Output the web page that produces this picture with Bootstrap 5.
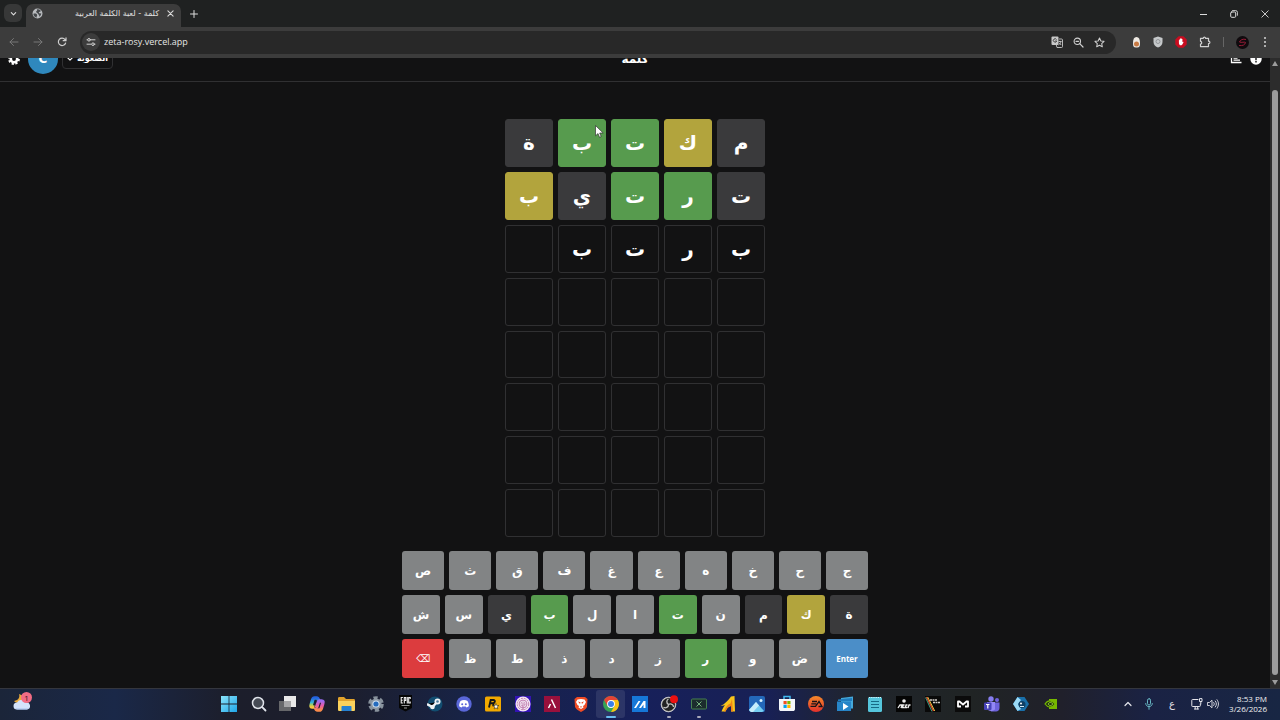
<!DOCTYPE html>
<html lang="ar">
<head>
<meta charset="utf-8">
<meta name="viewport" content="width=device-width, initial-scale=1">
<title>كلمة - لعبة الكلمة العربية</title>
<link href="https://cdn.jsdelivr.net/npm/bootstrap@5.3.0/dist/css/bootstrap.min.css" rel="stylesheet">
<style>
  body { background: #121213; color: #fff; font-family: "Open Sans", "DejaVu Sans", sans-serif; }
  button { border: 0; background: none; padding: 0; color: inherit; }
  svg { display: block; flex: none; }
  .line { fill: none; stroke: currentColor; stroke-linecap: round; stroke-linejoin: round; }

  /* browser frame */
  .tabstrip { height: 27px; background: #1f2121; color: #dcdcdc; }
  .tab-search { width: 18px; height: 18px; border-radius: 6px; background: #373838; margin: 4px; }
  .tab-open { width: 155px; height: 23px; border-radius: 7px 7px 0 0; background: #3c3c3c; padding: 0 7px 4px 6px; }
  .tab-title { font: 8px/14px "DejaVu Sans", sans-serif; color: #e0e0e0; }
  .new-tab { margin-left: 9px; }
  .window-buttons { gap: 23px; padding-right: 11px; }
  .toolbar { height: 31px; background: #3c3c3c; color: #d0d0d0; padding-bottom: 1px; }
  .nav-buttons { width: 80px; padding-left: 2px; }
  .nav-buttons button { width: 24px; }
  .omnibox { height: 23px; border-radius: 12px; background: #282828; padding: 0 11px 0 2px; }
  .omnibox-actions { gap: 10px; }
  .site-info { width: 18px; height: 18px; border-radius: 9px; background: #3c3c3c; }
  .address { border: 0; background: none; outline: 0; padding: 0; color: #e6e6e6; font: 9px/14px "Open Sans", sans-serif; }
  .extensions { gap: 12px; padding: 0 11px 0 16px; }
  .divider { width: 1px; height: 10px; background: #666; }

  /* game */
  .game { background: #121213; font-family: "DejaVu Sans", sans-serif; }
  .game-header { height: 45px; margin-top: -21px; border-bottom: 1px solid #303032; }
  .side { flex: 1 1 0; }
  .game-title { font-size: 12px; line-height: 20px; font-weight: 700; }
  .avatar { width: 30px; height: 30px; background: #2f88bd; font-size: 12px; font-weight: 700; }
  .level { height: 20px; border: 1px solid #303032; border-radius: 4px; font: 700 8px/14px "DejaVu Sans", sans-serif; }
  .board { grid-template-columns: repeat(5, 48px); grid-template-rows: repeat(8, 1fr); gap: 5px; height: 418px; margin: 37px auto 14px; }
  .cell { border: 1px solid #303032; border-radius: 3px; font-size: 20px; line-height: 28px; font-weight: 700; }
  .miss { background: #3a3a3c; border-color: #3a3a3c; }
  .hit { background: #579b4e; border-color: #579b4e; }
  .near { background: #b2a43d; border-color: #b2a43d; }
  .keyboard { max-width: 466px; width: 100%; }
  .keyboard, .key-row { gap: 5px; }
  .key { flex: 1 1 0; height: 39px; border-radius: 3px; font: 700 12px/16px "DejaVu Sans", sans-serif; }
  .idle { background: #828485; }
  .key-enter { background: #4b8ec8; font-size: 8px; font-family: "Open Sans", sans-serif; }
  .key-delete { background: #dc3c3e; font-weight: 400; font-size: 10px; }

  .scroller { width: 10px; background: #2c2c2c; padding: 3px 2px; gap: 5px; color: #9c9c9c; }
  .scroll-thumb { width: 6px; border-radius: 3px; background: #9c9c9c; margin-top: 19px; }

  /* taskbar */
  .taskbar { height: 32px; padding-bottom: 2px; border-top: 1px solid #34363e; background: linear-gradient(90deg, #1b2539 0, #1a2848 9%, #1c1e2b 18%, #1c1e2d 27%, #182345 36%, #17205a 50%, #182055 60%, #20252c 67%, #202424 76%, #20202b 83%, #1a2244 90%, #182643 100%); }
  .weather { flex: 1 1 0; padding-left: 12px; }
  .apps { flex: 0 0 852px; padding-left: 1px; }
  .apps button { flex: 1 1 0; height: 28px; border-radius: 3px; }
  .apps .front { background: #ffffff18; }
  .badge-count { top: 1px; left: 9px; width: 11px; height: 11px; border-radius: 6px; background: #f36c84; color: #3a1020; font: 8px/11px "Open Sans", sans-serif; }
  .run { left: 50%; bottom: 0; width: 4px; height: 2px; margin-left: -2px; border-radius: 1px; background: #aab; }
  .front .run { width: 10px; margin-left: -5px; background: #68bdf0; }
  .tray { flex: 1 1 0; padding-right: 13px; color: #e4e4ea; }
  .mic { margin-left: 13px; }
  .clock { font: 8px/10px "Open Sans", sans-serif; width: 40px; color: #f2f2f2; }
  .lang { font: 10px/14px "DejaVu Sans", sans-serif; }
  .pointer { left: 595px; top: 125px; }
</style>
</head>
<body class="d-flex flex-column vh-100 overflow-hidden">

<div class="tabstrip d-flex">
  <button class="tab-search d-flex align-items-center justify-content-center" aria-label="Search tabs"><svg width="7" height="7" viewBox="0 0 8 8"><path class="line" stroke-width="1.3" d="M1.5 3 4 5.500 6.500 3"/></svg></button>
  <div class="tab-open d-flex align-items-center mt-1">
    <svg width="11" height="11" viewBox="0 0 16 16"><circle cx="8" cy="8" r="7.200" fill="#b9bcbf"/><path fill="#45484b" d="M2 8.500C4 7.500 7 8 7.500 10c.3 1.300-1 1.500-.8 4C4 13.500 2 11.500 2 8.500zM7 2c3-1 5 .5 6 2.500-1 1.500-2.500.8-3 2-.5 1 .8 1.500 3.500 1.300-.3 2.700-1.500 4.200-3 5 .5-2-.5-2.500-1-3.500C9 8 6 7 6 5.500 6 4 8.500 4 7 2z"/></svg>
    <span class="tab-title flex-grow-1 pe-2" dir="rtl">كلمة - لعبة الكلمة العربية</span>
    <button aria-label="Close tab"><svg width="7" height="7" viewBox="0 0 8 8"><path class="line" stroke-width="1.200" d="M1 1l6 6M7 1 1 7"/></svg></button>
  </div>
  <button class="new-tab me-auto" aria-label="New tab"><svg width="8" height="8" viewBox="0 0 8 8"><path class="line" stroke-width="1" d="M4 .5v7M.5 4h7"/></svg></button>
  <div class="window-buttons d-flex align-items-center">
    <button aria-label="Minimize"><svg width="7" height="8" viewBox="0 0 7 8"><path class="line" d="M0 4.500h7"/></svg></button>
    <button aria-label="Restore"><svg width="8" height="8" viewBox="0 0 8 8"><rect class="line" x=".7" y="2" width="5" height="5.300" rx="1"/><path class="line" stroke-width=".9" d="M2.500.6h3.200A1.700 1.700 0 0 1 7.400 2.300v3"/></svg></button>
    <button aria-label="Close"><svg width="8" height="8" viewBox="0 0 8 8"><path class="line" stroke-width=".9" d="M.8.8l6.400 6.400M7.200.8.8 7.200"/></svg></button>
  </div>
</div>

<div class="toolbar d-flex align-items-center">
  <div class="nav-buttons d-flex align-items-center">
    <button aria-label="Back"><svg class="mx-auto" width="12" height="12" viewBox="0 0 12 12" color="#777"><path class="line" d="M10 6H2M5.500 2.500 2 6l3.500 3.500"/></svg></button>
    <button aria-label="Forward"><svg class="mx-auto" width="12" height="12" viewBox="0 0 12 12" color="#777"><path class="line" d="M2 6h8M6.500 2.500 10 6 6.500 9.500"/></svg></button>
    <button aria-label="Reload"><svg class="mx-auto" width="12" height="12" viewBox="0 0 12 12"><path class="line" stroke-width="1.200" d="M9.600 7A3.700 3.700 0 1 1 9 3.600L9.800 4.500M10 1.800v2.900H7.200"/></svg></button>
  </div>
  <div class="omnibox d-flex align-items-center flex-grow-1">
    <button class="site-info d-flex align-items-center justify-content-center me-1" aria-label="Site information"><svg width="10" height="10" viewBox="0 0 10 10"><path class="line" d="M1 2.800h.5M5 2.800h4M1 7.200h4M8.700 7.200h.3"/><circle class="line" cx="3" cy="2.800" r="1.300"/><circle class="line" cx="7" cy="7.200" r="1.300"/></svg></button>
    <input class="address flex-grow-1" type="text" value="zeta-rosy.vercel.app" aria-label="Address">
    <div class="omnibox-actions d-flex align-items-center">
      <button aria-label="Translate"><svg width="12" height="12" viewBox="0 0 12 12"><rect x=".5" y=".5" width="7" height="8.500" rx="1" fill="#c8c8c8"/><path fill="none" stroke="#333" stroke-width=".9" d="M5.500 3.500A1.700 1.700 0 1 0 5.700 5H4.200"/><path fill="none" stroke="#c8c8c8" stroke-width=".9" d="M8 3h2.500a1 1 0 0 1 1 1v6.500a1 1 0 0 1-1 1H6L5.300 9M7.500 5.500h3M9 4.800v.7M10 5.500C9.500 7.500 8.500 8.300 7.500 9M8 6.700l2.200 2.300"/></svg></button>
      <button aria-label="Zoom"><svg width="11" height="11" viewBox="0 0 11 11"><circle class="line" cx="4.300" cy="4.300" r="3.200" stroke-width="1.100"/><path class="line" stroke-width="1.200" d="M6.700 6.700 10 10M3 4.300h2.600"/></svg></button>
      <button aria-label="Bookmark"><svg width="11" height="11" viewBox="0 0 16 16"><path class="line" stroke-width="1.500" d="M8 1.500l2 4.300 4.600.5-3.400 3.200.9 4.700L8 11.900l-4.100 2.300.9-4.700L1.400 6.300 6 5.800z"/></svg></button>
    </div>
  </div>
  <div class="extensions d-flex align-items-center">
    <button aria-label="Extension"><svg width="9" height="12" viewBox="0 0 9 12"><path fill="#efeae4" d="M4.500 1C7 1 8 3 8 7s-1 4.500-3.500 4.500S1 11 1 7s1-6 3.500-6z"/><circle cx="4.500" cy="8" r="2.500" fill="#c97a43"/></svg></button>
    <button aria-label="Shield extension"><svg width="10" height="12" viewBox="0 0 10 12"><path fill="#c5c8ca" d="M5 .5l4.500 1.500v4c0 3-2 4.500-4.500 5.500C2.500 10.500.5 9 .5 6V2z"/><circle cx="5" cy="5.500" r="2" fill="none" stroke="#8d9194" stroke-width=".9"/></svg></button>
    <button aria-label="Blocker extension"><svg width="12" height="12" viewBox="0 0 12 12"><path fill="#c90d20" d="M3.600.3h4.800L11.700 3.600v4.800l-3.300 3.300H3.600L.3 8.400V3.600z"/><path fill="#fff" d="M3.900 6V4.200l.7-.1V3l.8-.2.1-.5h.9l.2.600.8.1v3l.8-.3.300.5-1 2-1 1.100H5L4 8z"/></svg></button>
    <button aria-label="Extensions"><svg width="12" height="12" viewBox="0 0 12 12"><path class="line" stroke-width="1.200" d="M1.500 2.300h2.800C4.300.8 6.500.8 6.500 2.300h3v2.900c1.900 0 1.900 2.400 0 2.400v3h-8V8c1.600 0 1.600-2.700 0-2.700z"/></svg></button>
    <span class="divider"></span>
    <button aria-label="Profile"><svg width="13" height="13" viewBox="0 0 13 13"><circle cx="6.500" cy="6.500" r="6.500" fill="#100b0e"/><path fill="none" stroke="#981c36" stroke-width="1" d="M10 3.500C7 2.500 4 4 3.500 6c2 1 5-.5 6 .5-.5 2.500-3 3.500-6.500 3"/></svg></button>
    <button aria-label="Menu"><svg width="8" height="12" viewBox="0 0 8 12" fill="#d5d5d5"><circle cx="4" cy="2" r="1"/><circle cx="4" cy="6" r="1"/><circle cx="4" cy="10" r="1"/></svg></button>
  </div>
</div>

<div class="d-flex flex-grow-1 overflow-hidden">
  <main class="game flex-grow-1 overflow-hidden" dir="rtl">
    <header class="game-header d-flex align-items-center px-2">
      <div class="side d-flex align-items-center gap-2">
        <button aria-label="مساعدة"><svg width="12" height="12" viewBox="0 0 12 12"><circle cx="6" cy="6" r="5.700" fill="#fff"/><path fill="none" stroke="#121213" stroke-width="1.400" d="M6 2.500v4.700M6 8v1.500"/></svg></button>
        <button aria-label="إحصائيات"><svg width="12" height="12" viewBox="0 0 12 12"><path fill="none" stroke="#fff" stroke-width="1.300" d="M1.500 0v9.500h10M3.500 2.500h5M3.500 5h4M3.500 7.200h6.500"/></svg></button>
      </div>
      <div class="game-title">كلمة</div>
      <div class="side d-flex align-items-center justify-content-end">
        <button class="level px-1 me-1" aria-haspopup="true"><span>الصعوبة</span><svg class="d-inline-block me-1" width="6" height="6" viewBox="0 0 8 8"><path class="line" stroke-width="1.500" d="M1 2.500 4 5.500l3-3"/></svg></button>
        <span class="avatar rounded-circle d-flex align-items-center justify-content-center mx-1">C</span>
        <button class="me-1" aria-label="الإعدادات"><svg width="12" height="12" viewBox="0 0 12 12"><circle cx="6" cy="6" r="3.200" fill="none" stroke="#fff" stroke-width="2.600"/><circle cx="6" cy="6" r="4.900" fill="none" stroke="#fff" stroke-width="2" stroke-dasharray="2.200 1.650"/></svg></button>
      </div>
    </header>

    <div class="board d-grid justify-content-center" id="board"></div>
    <div class="keyboard d-flex flex-column mx-auto" id="keyboard"></div>
  </main>
  <div class="scroller d-flex flex-column align-items-center">
    <svg width="6" height="5" viewBox="0 0 6 5"><path fill="currentColor" d="M3 0l3 5H0z"/></svg>
    <div class="scroll-thumb flex-grow-1"></div>
    <svg width="6" height="5" viewBox="0 0 6 5"><path fill="currentColor" d="M0 0h6L3 5z"/></svg>
  </div>
</div>

<footer class="taskbar d-flex align-items-center">
  <div class="weather">
    <button class="position-relative" aria-label="Weather"><svg width="20" height="20" viewBox="0 0 20 20"><path fill="#e9aa3a" d="M7 3c1 3 0 6-5 7 2 3 7 2 9-1s-1-5-4-6z"/><path fill="#d4e3fb" d="M5 18.500a3.500 3.500 0 0 1 0-7 5 5 0 0 1 9 0 3.500 3.500 0 0 1 1 7z"/><path fill="#a6c0ec" d="M3 17.500h14l-2 1H5z"/></svg><span class="badge-count position-absolute text-center">1</span></button>
  </div>
  <nav class="apps d-flex" aria-label="Taskbar">
    <button aria-label="Start"><svg class="mx-auto" width="16" height="16" viewBox="0 0 16 16"><defs><linearGradient id="win" x2="1" y2="1"><stop stop-color="#8be4fb"/><stop offset="1" stop-color="#1fa6e8"/></linearGradient></defs><path fill="url(#win)" d="M0 0h7.600v7.600H0zM8.400 0H16v7.600H8.400zM0 8.400h7.600V16H0zM8.400 8.400H16V16H8.400z"/></svg></button>
    <button aria-label="Search"><svg class="mx-auto" width="16" height="16" viewBox="0 0 16 16"><circle cx="7" cy="7" r="5.500" fill="#454a54" stroke="#dfe3ea" stroke-width="1.500"/><path stroke="#dfe3ea" stroke-width="1.800" stroke-linecap="round" d="M11.200 11.200 14.500 14.500"/></svg></button>
    <button aria-label="Task view"><svg class="mx-auto" width="17" height="16" viewBox="0 0 17 16"><path fill="#e9e9e9" d="M5 0h12v11H5z"/><path fill="#66676a" d="M0 5h12v10H0z"/><path fill="#a5a5a7" d="M5 5h7v6H5z"/></svg></button>
    <button aria-label="Copilot"><svg class="mx-auto" width="16" height="16" viewBox="0 0 16 16"><defs><linearGradient id="cpa" x2="0" y2="1"><stop stop-color="#2463e0"/><stop offset=".5" stop-color="#36b5d8"/><stop offset=".75" stop-color="#a4cf62"/><stop offset="1" stop-color="#fbc53c"/></linearGradient><linearGradient id="cpb" x2="0" y2="1"><stop stop-color="#9a6cf2"/><stop offset=".5" stop-color="#e65aa8"/><stop offset="1" stop-color="#fa8a4a"/></linearGradient></defs><path fill="none" stroke="url(#cpa)" stroke-width="3.600" stroke-linejoin="round" d="M9.500 4.500C9 2 8.500 2 7.500 2H5.500C4.500 2 4 2.800 3.700 3.800L2.300 8.500C1.800 10.300 2 11 3.500 11h2"/><path fill="none" stroke="url(#cpb)" stroke-width="3.600" stroke-linejoin="round" d="M6.500 11.500C7 14 7.500 14 8.500 14h2c1 0 1.500-.8 1.800-1.800l1.400-4.700C14.200 5.700 14 5 12.500 5h-2c-1 0-1.200 1-1.500 2L7.500 11.500"/></svg></button>
    <button aria-label="Files"><svg class="mx-auto" width="17" height="16" viewBox="0 0 17 16"><path fill="#e2a32c" d="M0 2.500C0 1.500.5 1 1.500 1H6l2 2h7.500c1 0 1.500.5 1.500 1.500V8H0z"/><path fill="#fbd25c" d="M0 5h17v8.500c0 1-.5 1.500-1.500 1.500h-14C.5 15 0 14.500 0 13.500z"/><path fill="#2581d2" d="M3.500 15v-4c0-.6.4-1 1-1h8c.6 0 1 .4 1 1v4z"/></svg></button>
    <button aria-label="Settings"><svg class="mx-auto" width="16" height="16" viewBox="0 0 16 16"><circle cx="8" cy="8" r="6.300" fill="none" stroke="#88929c" stroke-width="3" stroke-dasharray="4.200 2.400"/><circle cx="8" cy="8" r="5.600" fill="#8d98a3"/><circle cx="8" cy="8" r="3.600" fill="#d5e4f3"/><circle cx="8" cy="8" r="2.600" fill="#246bbd"/></svg></button>
    <button aria-label="Epic Games"><svg class="mx-auto" width="15" height="17" viewBox="0 0 15 17"><path fill="#060606" d="M1 0h13v13l-6.500 3.500L1 13z"/><path fill="none" stroke="#eee" stroke-width="1.100" d="M4.900 2.500H3.200v5.500h1.700M3.200 5.200h1.500M6.300 8.500V2.500h1.400v3H6.300M9.300 2v6.500M12.200 4V2.500h-1.500V8h1.500V6.500"/><path stroke="#bbb" stroke-width=".8" d="M3.500 10.500h8M6 13h3"/></svg></button>
    <button aria-label="Steam"><svg class="mx-auto" width="16" height="16" viewBox="0 0 16 16"><circle cx="8" cy="8" r="7.500" fill="#124d70"/><path stroke="#eef3f6" stroke-width="2.500" d="M0 8l5.500 3L10 6"/><circle cx="10.500" cy="5.500" r="3" fill="#eef3f6"/><circle cx="10.500" cy="5.500" r="1.300" fill="#4c7c99"/><circle cx="5.500" cy="11" r="2.300" fill="#eef3f6"/></svg></button>
    <button aria-label="Discord"><svg class="mx-auto" width="16" height="16" viewBox="0 0 16 16"><circle cx="8" cy="8" r="7.700" fill="#5a67d8"/><path fill="#fff" d="M4.500 5c2-1.300 5-1.300 7 0 1 1.800 1.500 3.500 1.300 5.200-.8.700-1.600 1-2.400 1.200l-.7-1H6.300l-.7 1c-.9-.2-1.700-.5-2.400-1.200C3 8.500 3.500 6.800 4.500 5z"/><circle cx="6.200" cy="8.200" r="1" fill="#5a67d8"/><circle cx="9.800" cy="8.200" r="1" fill="#5a67d8"/></svg></button>
    <button aria-label="Rockstar Games"><svg class="mx-auto" width="16" height="16" viewBox="0 0 16 16"><rect width="16" height="15" y=".5" rx="1.500" fill="#f2a900"/><path fill="none" stroke="#151515" stroke-width="1.900" d="M4 11.500 5.700 4h2.800c2 0 1.700 3.300-.5 3.300H5.500M7.500 7.300c1.300.2.800 1.700.7 3"/><path fill="#fff" stroke="#151515" stroke-width=".5" d="M11 7.500l.8 2h2.200l-1.700 1.300.6 2.200-1.900-1.200-1.900 1.200.6-2.200L8 9.500h2.200z"/></svg></button>
    <button aria-label="Fingerprint app"><svg class="mx-auto" width="16" height="16" viewBox="0 0 16 16"><path fill="#3313b4" d="M0 0h16v16H0z"/><circle cx="8" cy="8" r="7.500" fill="#f2e5f3"/><g fill="none" stroke="#b667a0" stroke-width=".8"><circle cx="8" cy="8" r="5.700" stroke-dasharray="2 1"/><circle cx="8" cy="8" r="3.900"/><circle cx="8" cy="8" r="2" stroke-dasharray="2 1"/><path d="M8 7v7"/></g></svg></button>
    <button aria-label="Armoury"><svg class="mx-auto" width="16" height="16" viewBox="0 0 16 16"><path fill="#99103c" d="M0 0h16v16H0z"/><path fill="none" stroke="#fff" stroke-width="1.500" d="M4.500 12 6.500 8M7.500 3.500 11.500 12"/></svg></button>
    <button aria-label="Brave"><svg class="mx-auto" width="14" height="16" viewBox="0 0 14 16"><path fill="#ef4b25" d="M3 1h8l2.500 2-.5 8c-1.500 2.500-3.500 3.500-6 5-2.500-1.500-4.500-2.500-6-5L.5 3z"/><path fill="#fff" d="M3.500 3.500 7 3l3.500.5L12 6l-1.500 3L9 10l.5 1.500L7 13l-2.500-1.500L5 10 3.500 9 2 6z"/><path fill="#ef4b25" d="M4 5.500l2.500.7L6 8zM10 5.500l-2.500.7L8 8zM5.700 10.500h2.600L7 11.700z"/></svg></button>
    <button class="front position-relative" aria-label="Chrome"><svg class="mx-auto" width="16" height="16" viewBox="0 0 16 16"><circle cx="8" cy="8" r="8" fill="#36a455"/><path fill="#e54335" d="M1.100 4A8 8 0 0 1 14.900 4H8L4.500 10z"/><path fill="#fbc116" d="M14.900 4A8 8 0 0 1 8 16l3.500-6L8 4z"/><circle cx="8" cy="8" r="3.900" fill="#fff"/><circle cx="8" cy="8" r="3" fill="#3c7fea"/></svg><span class="run position-absolute"></span></button>
    <button aria-label="MyASUS"><svg class="mx-auto" width="16" height="16" viewBox="0 0 16 16"><path fill="#1677d8" d="M0 0h16v16H0z"/><path fill="#fff" d="M2 12 6.500 5h2L4 12zM7 12l4.500-7h2v7h-2V8.500L9 12z"/></svg></button>
    <button class="position-relative" aria-label="OBS Studio"><svg class="mx-auto" width="18" height="18" viewBox="0 0 18 18"><circle cx="8.500" cy="9.500" r="7.300" fill="#c9c9c9" stroke="#c6c6c6"/><circle cx="8.500" cy="9.500" r="6.500" fill="#222"/><path fill="none" stroke="#c4c4c4" stroke-width="1.300" d="M8.500 9.500C6 8 6.500 5 8.500 4M8.500 9.500c0 3-3 4-5 2.700M8.500 9.500c2.500-1.300 5 0 5 2.500"/><circle cx="14" cy="4.300" r="4" fill="#ed1010"/></svg><span class="run position-absolute"></span></button>
    <button class="position-relative" aria-label="Xbox overlay"><svg class="mx-auto" width="16" height="16" viewBox="0 0 16 16"><rect x=".5" y="3" width="15" height="10" rx="1" fill="#1b2c2d" stroke="#478051"/><path stroke="#76b27d" d="M5.500 5.500l5 5M10.500 5.500l-5 5"/></svg><span class="run position-absolute"></span></button>
    <button aria-label="Game launcher"><svg class="mx-auto" width="16" height="16" viewBox="0 0 16 16"><path fill="#f9c51b" d="M.5 10C5 8 8.500 4 11 .5L14.500 0 15 15.500h-4L11 10C8 10.500 6.500 13 5.500 15.500H1.500C2.500 13 3.500 11 5 9.300z"/><path fill="#ef8419" d="M10.500 7.500 12 3l1 12.500h-2L11 10C8 10.500 6.500 13 5.500 15.500H4C5.500 11 7.500 8.500 10.500 7.500z"/></svg></button>
    <button aria-label="Photos"><svg class="mx-auto" width="16" height="16" viewBox="0 0 16 16"><rect width="16" height="16" rx="2" fill="#2367b9"/><path fill="#75cdf2" d="M0 14 7 6l8 9-2 1H2z"/><path fill="#c6edfc" d="M7 6l3 3.500L4 16H2l-2-2z"/><circle cx="12" cy="4.500" r="1.500" fill="#d6f2ff"/></svg></button>
    <button aria-label="Store"><svg class="mx-auto" width="16" height="17" viewBox="0 0 16 17"><path fill="none" stroke="#40b8ee" stroke-width="1.500" d="M5 5V1.500h6V5"/><path fill="#f3f6fa" d="M0 4h16v10c0 1.500-1 2-2 2H2c-1 0-2-.5-2-2z"/><path fill="#f25022" d="M4.500 6H7.700v3.200H4.500z"/><path fill="#7fba00" d="M8.300 6h3.200v3.200H8.300z"/><path fill="#00a4ef" d="M4.500 9.800h3.200V13H4.500z"/><path fill="#ffb900" d="M8.300 9.800h3.200V13H8.300z"/></svg></button>
    <button aria-label="EA"><svg class="mx-auto" width="16" height="16" viewBox="0 0 16 16"><defs><linearGradient id="ea" x2="0" y2="1"><stop stop-color="#f58a2a"/><stop offset="1" stop-color="#e3302c"/></linearGradient></defs><circle cx="8" cy="8" r="8" fill="url(#ea)"/><path fill="none" stroke="#171319" stroke-width="1.300" d="M4 5.500h5M3.300 7.800h5M2.500 10.300h5L11 5.500l3 5h-3.500"/></svg></button>
    <button aria-label="Media player"><svg class="mx-auto" width="17" height="16" viewBox="0 0 17 16"><path fill="#45a9da" d="M4 2l12-1.500v12H4z"/><path fill="#207cbd" d="M1 3.500 15 2v3H1z"/><path fill="#2785c8" d="M0 5.500h14V15H0z"/><path fill="#fff" d="M6 7l5.500 3.500L6 14z"/></svg></button>
    <button aria-label="Notepad"><svg class="mx-auto" width="14" height="16" viewBox="0 0 14 16"><rect y="1" width="14" height="15" rx="1.500" fill="#55c6dc"/><path stroke="#d8f6fa" stroke-width="1.200" d="M1 1.500h12" stroke-dasharray="1.200 1"/><path stroke="#176a86" stroke-width="1.100" d="M3 5.500h8M3 8.500h8M3 11.500h8"/></svg></button>
    <button aria-label="Acer"><svg class="mx-auto" width="16" height="16" viewBox="0 0 16 16"><path fill="#050505" d="M0 0h16v16H0z"/><circle cx="8" cy="5" r="1.800" fill="#eee"/><path fill="none" stroke="#eee" stroke-width="1.300" d="M2 12l2-3h2l-1 3M8.500 9H7l-.5 2.500h2M11.500 9H10l-.7 2.500h2M12 12l1-3h1.500"/></svg></button>
    <button aria-label="Prism app"><svg class="mx-auto" width="16" height="16" viewBox="0 0 16 16"><path fill="#090909" d="M0 0h16v16H0z"/><path stroke="#e34a31" stroke-width="1.200" d="M1.500 1l7 14"/><path stroke="#eac740" stroke-width="1" d="M2.700 1l7 14"/><path stroke="#3c9f84" stroke-width="1" d="M.5 1.500l6.500 14"/><path stroke="#d4cfca" stroke-width="1.600" d="M5 4h7M8 6.500h7.500" stroke-dasharray="2 .5"/></svg></button>
    <button aria-label="Modrinth"><svg class="mx-auto" width="16" height="16" viewBox="0 0 16 16"><path fill="#0b0b0b" d="M0 0h16v16H0z"/><path fill="none" stroke="#fff" stroke-width="1.800" stroke-linejoin="round" d="M6 10.500H3v-5h1.500L8 8.500l3.500-3H13v5h-3"/></svg></button>
    <button aria-label="Teams"><svg class="mx-auto" width="16" height="16" viewBox="0 0 16 16"><circle cx="7" cy="3" r="2.700" fill="#867df0"/><circle cx="13" cy="4" r="2" fill="#6f62dd"/><path fill="#6d62dc" d="M4 6.500h11.500V12c0 2-1.500 3.500-3.500 3.500H7z"/><path fill="#9287f5" d="M3 6h8v7c0 2-6 3-8 0z"/><rect y="6.500" width="7.500" height="7.500" rx="1" fill="#4742b8"/><path stroke="#fff" stroke-width="1.200" d="M2 8.500h3.500M3.800 8.500V12.500"/></svg></button>
    <button aria-label="Hex app"><svg class="mx-auto" width="16" height="16" viewBox="0 0 16 16"><path fill="#196fa9" d="M4.500 1h7L16 8l-4.500 7h-7L0 8z"/><path fill="#9bd9f5" d="M4.500 1 8 4 5 8l3 5-3.500 2L0 8z"/><circle cx="9" cy="8.500" r="3.500" fill="#114064"/><circle cx="8" cy="7.500" r="1" fill="#fff"/><path stroke="#d6efff" d="M7 10.500h4"/></svg></button>
    <button aria-label="NVIDIA"><svg class="mx-auto" width="14" height="12" viewBox="0 0 14 12"><path fill="#76b900" d="M5 1h8v10H5z"/><path fill="#20300d" stroke="#76b900" stroke-width="1.200" d="M1 6c3-4.500 7-4 10 0-3 4-7 4-10 0z"/><path fill="none" stroke="#9bd63c" d="M4 6c1.500-2 3-2 5 0-2 2-3.500 2-5 0z"/></svg></button>
  </nav>
  <div class="tray d-flex align-items-center justify-content-end">
    <button aria-label="Hidden icons"><svg width="8" height="8" viewBox="0 0 8 8"><path class="line" stroke-width="1.200" d="M1 5.500l3-3 3 3"/></svg></button>
    <button class="mic" aria-label="Microphone"><svg width="8" height="12" viewBox="0 0 8 12" color="#68b8c4"><rect class="line" x="2.500" y=".7" width="3" height="6.300" rx="1.500"/><path class="line" d="M.7 5.500c0 4.300 6.600 4.300 6.600 0M4 9v2.300"/></svg></button>
    <button class="lang ms-3" aria-label="Input language">ع</button>
    <button class="ms-3" aria-label="Network"><svg width="12" height="12" viewBox="0 0 12 12"><path class="line" d="M7 1.500H1.500C1 1.500.8 1.800.8 2.200v5.600c0 .5.2.7.7.7h7c.5 0 .8-.2.8-.7V6M3.500 11h4M4.200 8.800V11M6.700 8.800V11M8.500 1v2.500h2.500V1zM9.800 3.500V6"/></svg></button>
    <button class="mx-1" aria-label="Volume"><svg width="12" height="12" viewBox="0 0 12 12"><path class="line" stroke-width=".9" d="M.8 4.500h1.700L5 2.200v7.600L2.500 7.500H.8zM6.700 4.500c.8 1 .8 2 0 3M8.300 3c1.500 2 1.500 4 0 6M10 1.700c2 2.800 2 5.800 0 8.600"/></svg></button>
    <div class="clock text-end ms-1"><div>8:53 PM</div><div>3/26/2026</div></div>
  </div>
</footer>

<svg class="pointer position-absolute" width="9" height="13" viewBox="0 0 9 13"><path fill="#fff" stroke="#333" stroke-width=".7" d="M.5.5v10.300L3 8.600l1.500 3.700 1.700-.7L4.700 8H8.200z"/></svg>

<script src="https://cdn.jsdelivr.net/npm/bootstrap@5.3.0/dist/js/bootstrap.bundle.min.js"></script>
<script>
  const guesses = [
    [['م', 'miss'], ['ك', 'near'], ['ت', 'hit'], ['ب', 'hit'], ['ة', 'miss']],
    [['ت', 'miss'], ['ر', 'hit'], ['ت', 'hit'], ['ي', 'miss'], ['ب', 'near']],
    [['ب', ''], ['ر', ''], ['ت', ''], ['ب', '']]
  ];
  const board = document.getElementById('board');
  for (let r = 0; r < 8; r++) {
    for (let c = 0; c < 5; c++) {
      const [letter, state] = (guesses[r] && guesses[r][c]) || ['', ''];
      const cell = document.createElement('div');
      cell.className = 'cell d-flex align-items-center justify-content-center ' + state;
      cell.textContent = letter;
      board.append(cell);
    }
  }
  const rows = ['ج ح خ ه ع غ ف ق ث ص', 'ة ك م ن ت ا ل ب ي س ش', 'Enter ض و ر ز د ذ ط ظ ⌫'];
  const known = { 'ة': 'miss', 'ك': 'near', 'م': 'miss', 'ت': 'hit', 'ب': 'hit', 'ي': 'miss', 'ر': 'hit', 'Enter': 'key-enter', '⌫': 'key-delete' };
  for (const row of rows) {
    const line = document.createElement('div');
    line.className = 'key-row d-flex';
    for (const letter of row.split(' ')) {
      const key = document.createElement('button');
      key.type = 'button';
      key.className = 'key ' + (known[letter] || 'idle');
      key.textContent = letter;
      line.append(key);
    }
    document.getElementById('keyboard').append(line);
  }
</script>
</body>
</html>
